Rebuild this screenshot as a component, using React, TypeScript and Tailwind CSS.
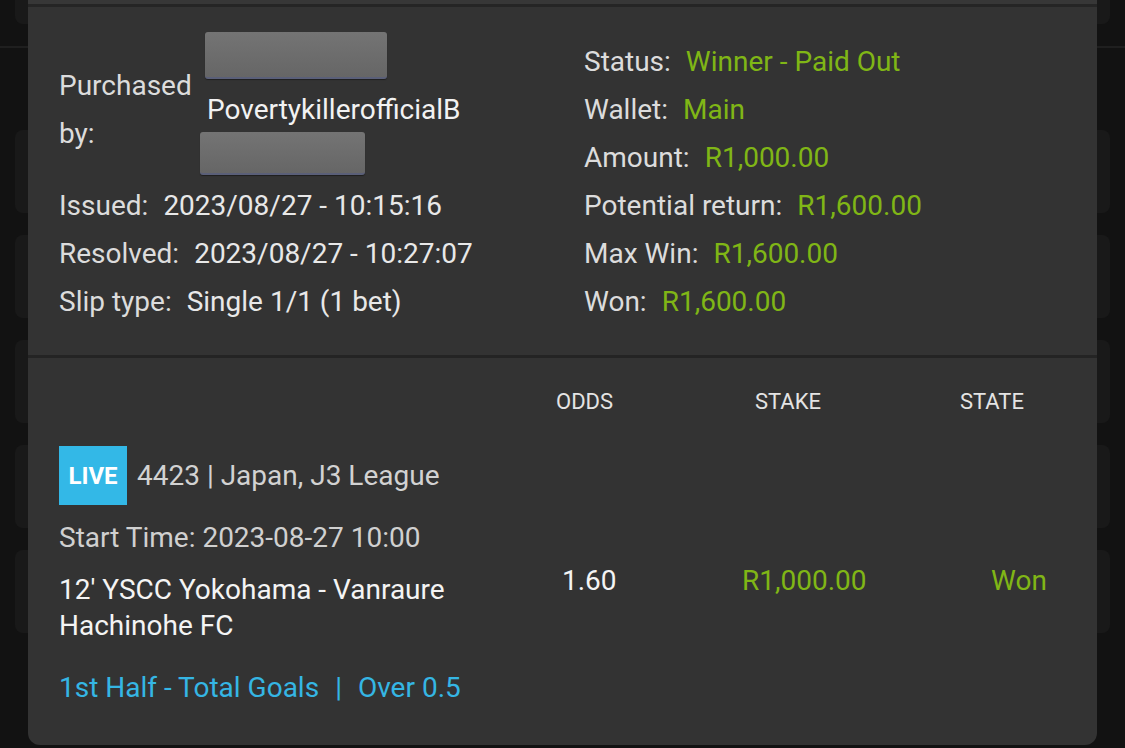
const green = "text-[#80b616]";

const Row = ({ label, value, valueClass }: { label: string; value: string; valueClass?: string }) => (
  <div className="h-[48px] flex items-center whitespace-nowrap pt-[1px]">
    <span className="text-[#dcdcdc]">{label}</span>
    <span className={`ml-[15px] ${valueClass ?? "text-[#e8e8e8]"}`}>{value}</span>
  </div>
);

const Redacted = ({ className }: { className: string }) => (
  <div
    className={`rounded-[3px] bg-gradient-to-b from-[#747474] to-[#666666] border-b-2 border-[#5a5f78] shadow-[0_1px_1px_rgba(0,0,0,0.4)] ${className}`}
  />
);

const SideCards = ({ right }: { right?: boolean }) => {
  const edge = right ? "mr-[15px] rounded-r-[8px]" : "ml-[15px] rounded-l-[8px]";
  return (
    <div className="w-[28px] shrink-0 flex flex-col">
      <div className={`h-[24px] bg-[#191919] ${right ? "mr-[15px] rounded-br-[8px]" : "ml-[15px] rounded-bl-[8px]"}`} />
      <div className="mt-[22px] h-[2px] bg-[#1f1f1f]" />
      <div className={`mt-[82px] h-[83px] bg-[#191919] ${edge}`} />
      <div className={`mt-[22px] h-[83px] bg-[#191919] ${edge}`} />
      <div className={`mt-[22px] h-[83px] bg-[#191919] ${edge}`} />
      <div className={`mt-[22px] h-[83px] bg-[#191919] ${edge}`} />
      <div className={`mt-[22px] h-[83px] bg-[#191919] ${edge}`} />
    </div>
  );
};

export default function App() {
  return (
    <div
      className="w-[1125px] h-[748px] bg-[#121212] flex overflow-hidden text-[28px]"
      style={{ fontFamily: "Roboto, 'Liberation Sans', sans-serif" }}
    >
      <SideCards />
      <div className="flex-1 flex flex-col">
        <div className="h-[4px] bg-[#373737]" />
        <div className="h-[3px] bg-[#252525]" />
        <div className="flex-1 bg-[#333333] rounded-b-[12px] mb-[3px] flex flex-col">
          {/* summary */}
          <div className="flex pl-[31px] pt-[25px] pb-[30px]">
            <div className="w-[525px] shrink-0 flex flex-col">
              <div className="flex h-[149px]">
                <div className="w-[141px] shrink-0 flex flex-col justify-center pt-[7px] leading-[48px] text-[#dcdcdc]">
                  <span>Purchased</span>
                  <span>by:</span>
                </div>
                <div className="flex flex-col">
                  <Redacted className="ml-[5px] w-[182px] h-[47px]" />
                  <span className="ml-[7px] mt-[13px] leading-[36px] text-[#f2f2f2]">PovertykillerofficialB</span>
                  <Redacted className="mt-[4px] w-[165px] h-[43px]" />
                </div>
              </div>
              <Row label="Issued:" value="2023/08/27 - 10:15:16" />
              <Row label="Resolved:" value="2023/08/27 - 10:27:07" />
              <Row label="Slip type:" value="Single 1/1 (1 bet)" />
            </div>
            <div className="mt-[5px] flex flex-col">
              <Row label="Status:" value="Winner - Paid Out" valueClass={green} />
              <Row label="Wallet:" value="Main" valueClass={green} />
              <Row label="Amount:" value="R1,000.00" valueClass={green} />
              <Row label="Potential return:" value="R1,600.00" valueClass={green} />
              <Row label="Max Win:" value="R1,600.00" valueClass={green} />
              <Row label="Won:" value="R1,600.00" valueClass={green} />
            </div>
          </div>

          <div className="h-[3px] bg-[#242424]" />

          {/* bet line */}
          <div className="pl-[31px] grid grid-cols-[497px_199px_205px_1fr]">
            <div />
            <div className="pt-[32px] leading-[24px] text-[22px] text-[#e4e4e4]">ODDS</div>
            <div className="pt-[32px] leading-[24px] text-[22px] text-[#e4e4e4]">STAKE</div>
            <div className="pt-[32px] leading-[24px] text-[22px] text-[#e4e4e4]">STATE</div>

            <div className="pt-[32px] flex flex-col">
              <div className="flex items-center">
                <span className="w-[68px] h-[59px] bg-[#33b8e7] flex items-center justify-center text-white font-bold text-[24px]">
                  LIVE
                </span>
                <span className="ml-[10px] text-[#d2d2d2] whitespace-nowrap">4423 | Japan, J3 League</span>
              </div>
              <div className="mt-[15px] leading-[36px] text-[#d0d0d0] whitespace-nowrap">Start Time: 2023-08-27 10:00</div>
              <div className="mt-[16px] leading-[36px] text-[#f4f4f4] whitespace-nowrap">
                12' YSCC Yokohama - Vanraure
                <br />
                Hachinohe FC
              </div>
              <div className="mt-[26px] leading-[36px] text-[#35b6e4] whitespace-nowrap">
                1st Half - Total Goals<span className="mx-[16px]">|</span>Over 0.5
              </div>
            </div>
            <div className="pt-[149px] pl-[6px] leading-[36px] text-[#f4f4f4]">1.60</div>
            <div className="pt-[149px] -ml-[13px] leading-[36px] text-[#80b616]">R1,000.00</div>
            <div className="pt-[149px] pl-[31px] leading-[36px] text-[#80b616]">Won</div>
          </div>
        </div>
      </div>
      <SideCards right />
    </div>
  );
}
